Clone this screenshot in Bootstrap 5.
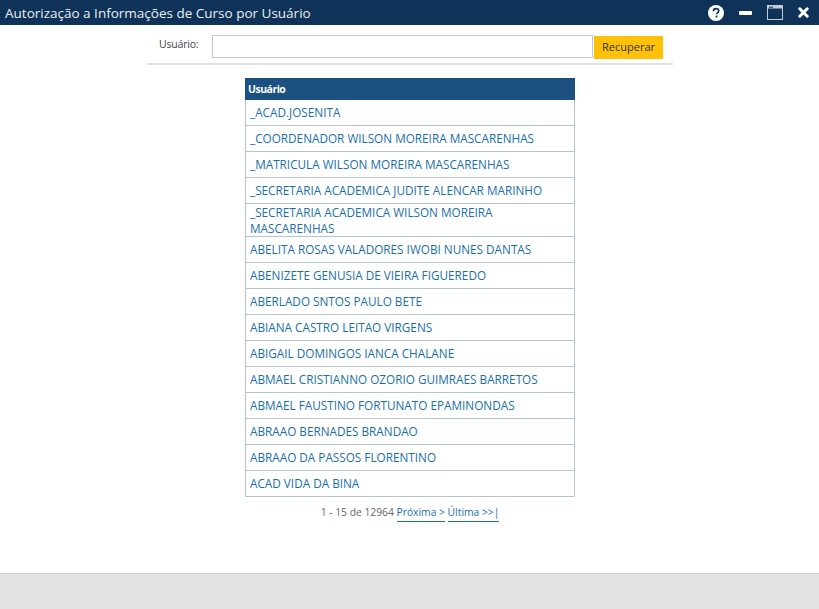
<!DOCTYPE html>
<html lang="pt-BR"><head><meta charset="utf-8"><title>Autorização</title>
<link rel="stylesheet" href="https://cdn.jsdelivr.net/npm/bootstrap@5.3.0/dist/css/bootstrap.min.css">
<style>
html,body{height:100%;overflow:hidden}
body{font-family:"Open Sans","Noto Sans",sans-serif;font-size:12px;color:#444;background:#fff}
.app-shell{height:609px}
.title-bar{height:25px;background:#0f3358;color:#e9eef3;padding:0 10px 0 5px}
.title-text{font-size:13.5px;margin:0;font-weight:400;line-height:24px;font-family:"Open Sans",sans-serif}
.win-icons{gap:15px}
.filter-area{width:526px;margin-left:147px;height:40px;border-bottom:2px solid #e0e0e0;padding-top:10px}
.filter-label{width:65px;padding-left:12px;font-size:10.5px;letter-spacing:-.2px;line-height:18px}
.filter-input{width:381px;height:23px;border:1px solid #c8c8c8;background:#fff;border-radius:0;margin-right:1px;padding:0 4px;flex:none}
.fetch-btn{background:#ffc107;border:0;border-radius:0;width:69px;height:23px;font-size:11px;color:#333;padding:0;margin-top:1px}
.user-table{width:330px;margin:13px 0 0 245px;border-collapse:collapse;font-size:11.75px}
.user-table th{background:#1b5080;color:#fff;font-size:10.5px;letter-spacing:-.5px;font-weight:700;height:21px;padding:0 2px;line-height:1;border:1px solid #1b5080}
.user-table td{border:1px solid #b4c4cc;padding:4px 4px 5px;line-height:16px;height:26px}
.user-table td.wrap-cell{padding:0 4px;height:33px}
.user-table a,.pager a{color:#1a6fa8;text-decoration:none}
.pager{margin:5px 0 0 245px;width:330px;text-align:center;font-size:10.3px;line-height:20px;color:#666}
.pager a{border-bottom:1px solid #1a6fa8;padding-bottom:2px}
.foot-band{height:36px;background:#e3e3e3;border-top:1px solid #cfcfcf}
</style></head><body>
<div class="app-shell d-flex flex-column">
<header class="title-bar d-flex justify-content-between align-items-center">
<h1 class="title-text">Autorização a Informações de Curso por Usuário</h1>
<div class="win-icons d-flex align-items-center">
<svg width="16" height="16" viewBox="0 0 16 16" aria-label="Ajuda"><circle cx="8" cy="8" r="8" fill="#fff"/><path d="M5.4 6.2C5.5 4.6 6.6 3.7 8.1 3.7c1.5 0 2.6.9 2.6 2.2 0 1-.6 1.5-1.3 2-.6.4-.8.7-.8 1.4" fill="none" stroke="#0f3358" stroke-width="1.7"/><rect x="7.6" y="10.6" width="1.8" height="1.8" fill="#0f3358"/></svg>
<svg width="13" height="4" viewBox="0 0 13 4" aria-label="Minimizar"><rect width="13" height="4" rx="1" fill="#fff"/></svg>
<svg width="16" height="15" viewBox="0 0 16 15" aria-label="Maximizar"><rect x=".5" y=".5" width="15" height="14" fill="none" stroke="#c3ccd5"/><rect x="1" y="1" width="14" height="2.5" fill="#c3ccd5"/><rect x="2" y="1.7" width="4" height="1" fill="#0f3358"/></svg>
<svg width="11" height="11" viewBox="0 0 11 11" aria-label="Fechar"><path d="M1.8 1.8l7.4 7.4M9.2 1.8l-7.4 7.4" stroke="#fff" stroke-width="3" stroke-linecap="round"/></svg>
</div></header>
<main class="flex-grow-1">
<form class="filter-area d-flex align-items-start">
<label class="filter-label" for="u">Usuário:</label>
<input id="u" class="filter-input" type="text">
<button class="fetch-btn" type="button">Recuperar</button>
</form>
<table class="user-table"><thead><tr><th>Usuário</th></tr></thead><tbody>
<tr><td><a href="#">_ACAD.JOSENITA</a></td></tr>
<tr><td><a href="#">_COORDENADOR WILSON MOREIRA MASCARENHAS</a></td></tr>
<tr><td><a href="#">_MATRICULA WILSON MOREIRA MASCARENHAS</a></td></tr>
<tr><td><a href="#">_SECRETARIA ACADEMICA JUDITE ALENCAR MARINHO</a></td></tr>
<tr><td class="wrap-cell"><a href="#">_SECRETARIA ACADEMICA WILSON MOREIRA MASCARENHAS</a></td></tr>
<tr><td><a href="#">ABELITA ROSAS VALADORES IWOBI NUNES DANTAS</a></td></tr>
<tr><td><a href="#">ABENIZETE GENUSIA DE VIEIRA FIGUEREDO</a></td></tr>
<tr><td><a href="#">ABERLADO SNTOS PAULO BETE</a></td></tr>
<tr><td><a href="#">ABIANA CASTRO LEITAO VIRGENS</a></td></tr>
<tr><td><a href="#">ABIGAIL DOMINGOS IANCA CHALANE</a></td></tr>
<tr><td><a href="#">ABMAEL CRISTIANNO OZORIO GUIMRAES BARRETOS</a></td></tr>
<tr><td><a href="#">ABMAEL FAUSTINO FORTUNATO EPAMINONDAS</a></td></tr>
<tr><td><a href="#">ABRAAO BERNADES BRANDAO</a></td></tr>
<tr><td><a href="#">ABRAAO DA PASSOS FLORENTINO</a></td></tr>
<tr><td><a href="#">ACAD VIDA DA BINA</a></td></tr>
</tbody></table>
<div class="pager">1 - 15 de 12964 <a href="#">Próxima &gt;</a> <a href="#">Última &gt;&gt;|</a></div>
</main>
<footer class="foot-band"></footer>
</div>
<script src="https://cdn.jsdelivr.net/npm/bootstrap@5.3.0/dist/js/bootstrap.bundle.min.js"></script>
</body></html>
